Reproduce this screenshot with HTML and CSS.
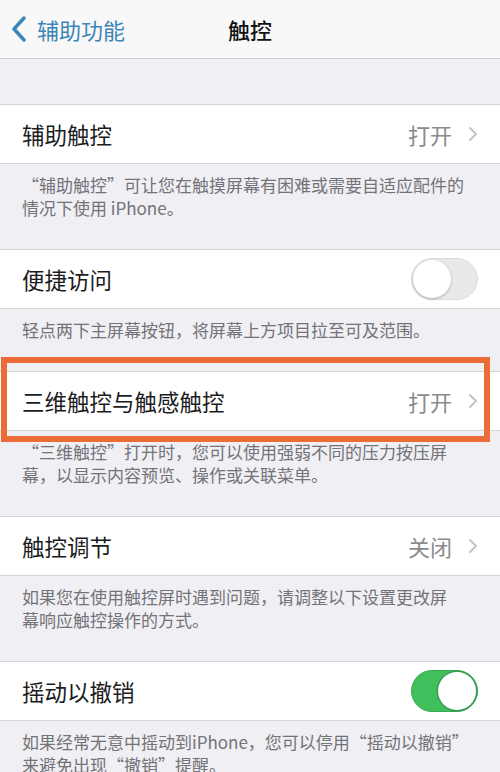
FILE: index.html
```html
<!DOCTYPE html>
<html lang="zh-CN">
  <head>
    <meta charset="UTF-8" />
    <meta name="viewport" content="width=device-width, initial-scale=1.0" />
    <title>触控</title>
    <link rel="stylesheet" href="styles.css">
  </head>
  <body>
    <!-- top navigation bar -->
    <div class="nav-bar">
      <div class="back">
        <svg class="back-icon" width="16" height="26" viewBox="0 0 16 26">
          <polyline points="13,2 3,13 13,24" fill="none" stroke="#3a86b8" stroke-width="3.4" stroke-linecap="round" stroke-linejoin="round" />
        </svg>
        <span>辅助功能</span>
      </div>
      <div class="nav-title">触控</div>
    </div>

    <!-- settings list -->
    <div class="settings">
      <div class="group">
        <div class="row">
          <span class="label">辅助触控</span>
          <span class="value">打开</span>
          <svg class="chevron" width="10" height="16" viewBox="0 0 10 16">
            <polyline points="2,2 8,8 2,14" fill="none" stroke="#c4c4c8" stroke-width="2" stroke-linecap="round" stroke-linejoin="round" />
          </svg>
        </div>
      </div>
      <p class="footer">“辅助触控”可让您在触摸屏幕有困难或需要自适应配件的<br>情况下使用 iPhone。</p>

      <div class="group">
        <div class="row">
          <span class="label">便捷访问</span>
          <span class="toggle"><span class="knob"></span></span>
        </div>
      </div>
      <p class="footer">轻点两下主屏幕按钮，将屏幕上方项目拉至可及范围。</p>

      <div class="group">
        <div class="row">
          <span class="label">三维触控与触感触控</span>
          <span class="value">打开</span>
          <svg class="chevron" width="10" height="16" viewBox="0 0 10 16">
            <polyline points="2,2 8,8 2,14" fill="none" stroke="#c4c4c8" stroke-width="2" stroke-linecap="round" stroke-linejoin="round" />
          </svg>
        </div>
      </div>
      <p class="footer">“三维触控”打开时，您可以使用强弱不同的压力按压屏<br>幕，以显示内容预览、操作或关联菜单。</p>

      <div class="group">
        <div class="row">
          <span class="label">触控调节</span>
          <span class="value">关闭</span>
          <svg class="chevron" width="10" height="16" viewBox="0 0 10 16">
            <polyline points="2,2 8,8 2,14" fill="none" stroke="#c4c4c8" stroke-width="2" stroke-linecap="round" stroke-linejoin="round" />
          </svg>
        </div>
      </div>
      <p class="footer">如果您在使用触控屏时遇到问题，请调整以下设置更改屏<br>幕响应触控操作的方式。</p>

      <div class="group">
        <div class="row">
          <span class="label">摇动以撤销</span>
          <span class="toggle on"><span class="knob"></span></span>
        </div>
      </div>
      <p class="footer">如果经常无意中摇动到iPhone，您可以停用“摇动以撤销”<br>来避免出现“撤销”提醒。</p>
    </div>

    <!-- orange highlight drawn over the 3D touch row -->
    <div class="highlight"></div>
  </body>
</html>
```

FILE: styles.css
```css
/* reset */
* {
  margin: 0;
  padding: 0;
  box-sizing: border-box;
}
body {
  position: relative;
  width: 500px;
  min-height: 772px;
  background-color: #efeff4;
  font-family: "Noto Sans CJK SC", "Noto Sans", sans-serif;
  color: #1c1c1e;
  overflow: hidden;
}
/* navigation bar */
.nav-bar {
  position: relative;
  height: 59px;
  background-color: #f8f8f8;
  border-bottom: 1px solid #cfcfd3;
  display: flex;
  align-items: center;
  justify-content: center;
}
.back {
  position: absolute;
  left: 11px;
  top: 0;
  height: 58px;
  display: flex;
  align-items: center;
  gap: 10px;
  color: #3a86b8;
  font-size: 22px;
}
.nav-title {
  font-size: 22px;
  font-weight: 500;
  color: #111;
}
/* list */
.settings {
  padding-top: 45px;
}
.group {
  background-color: #fff;
  border-top: 1px solid #d3d3d8;
  border-bottom: 1px solid #d3d3d8;
}
.row {
  height: 58px;
  display: flex;
  align-items: center;
  padding: 0 22px;
}
.label {
  flex: 1;
  font-size: 22.5px;
}
.value {
  font-size: 22px;
  color: #8a8a8f;
  margin-right: 16px;
}
.chevron {
  display: block;
}
.footer {
  padding: 9px 16px 30px 22px;
  font-size: 17px;
  line-height: 23px;
  color: #737378;
  white-space: nowrap;
}
/* switches */
.toggle {
  position: relative;
  width: 67px;
  height: 42px;
  border-radius: 21px;
  background-color: #e9e9eb;
  border: 1px solid #dcdcdf;
}
.knob {
  position: absolute;
  top: 1px;
  left: 1px;
  width: 38px;
  height: 38px;
  border-radius: 50%;
  background-color: #fff;
  box-shadow: 0 1px 3px rgba(0, 0, 0, 0.25);
}
.toggle.on {
  background-color: #3fc05c;
  border-color: #38a852;
}
.toggle.on .knob {
  left: auto;
  right: 1px;
  box-shadow: 0 0 0 1.5px #3a9e55;
}
/* annotation box */
.highlight {
  position: absolute;
  top: 357px;
  left: 1px;
  width: 489px;
  height: 85px;
  border: 6px solid #ec6c38;
}
```
